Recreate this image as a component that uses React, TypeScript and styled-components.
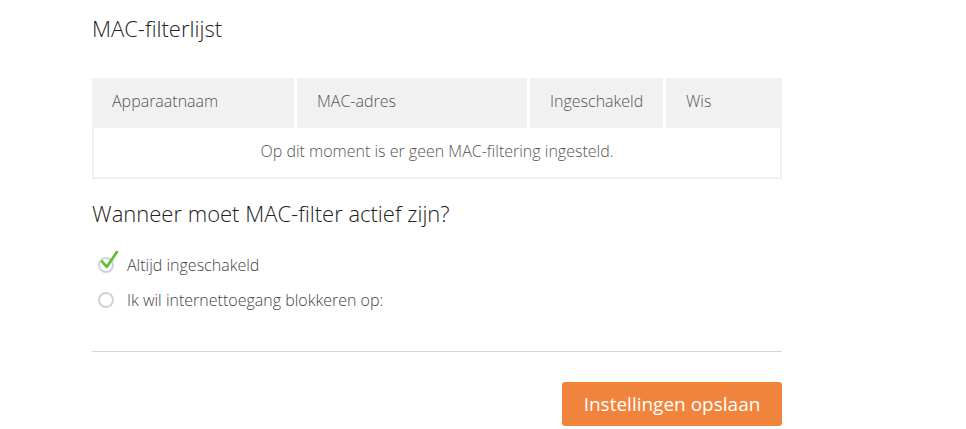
import { createGlobalStyle, styled } from "styled-components";

const GlobalStyle = createGlobalStyle`
  body {
    margin: 0;
    background: #fff;
    font-family: "Open Sans", "Liberation Sans", sans-serif;
    color: #333;
  }
`;

const Page = styled.div`
  width: 690px;
  padding: 13px 0 0 92px;
`;

const Title = styled.h2`
  margin: 0 0 35px;
  font-size: 22px;
  font-weight: 300;
  color: #222;
  line-height: 30px;
`;

const Table = styled.div`
  border: 2px solid #f0f0f2;
  border-top: none;
`;

const HeadRow = styled.div`
  display: grid;
  grid-template-columns: 202px 230px 133px 1fr;
  gap: 3px;
  margin: 0 -2px;
  background: #fff;
`;

const HeadCell = styled.div`
  height: 50px;
  display: flex;
  align-items: center;
  padding: 0 0 4px 20px;
  box-sizing: border-box;
  background: #f1f1f1;
  font-size: 16px;
  font-weight: 300;
  color: #555;
`;

const EmptyRow = styled.div`
  height: 49px;
  display: flex;
  align-items: center;
  justify-content: center;
  padding-bottom: 3px;
  box-sizing: border-box;
  font-size: 16px;
  font-weight: 300;
  color: #555;
`;

const Question = styled.h3`
  margin: 19px 0 28px;
  font-size: 22px;
  font-weight: 300;
  color: #222;
  line-height: 30px;
`;

const Options = styled.div`
  display: flex;
  flex-direction: column;
  gap: 17px;
`;

const Option = styled.label`
  display: flex;
  align-items: center;
  gap: 13px;
  height: 18px;
  padding-left: 6px;
  font-size: 16px;
  font-weight: 300;
  color: #444;
`;

const Radio = styled.span`
  position: relative;
  width: 16px;
  height: 16px;
  box-sizing: border-box;
  border: 2px solid #d2d2d2;
  border-radius: 50%;
  flex: none;
`;

const Tick = styled.svg`
  position: absolute;
  left: -1px;
  top: -9px;
`;

const Divider = styled.hr`
  margin: 42px 0 30px;
  border: none;
  border-top: 1px solid #d6d6d6;
`;

const Footer = styled.div`
  display: flex;
  justify-content: flex-end;
`;

const SaveButton = styled.button`
  width: 220px;
  height: 44px;
  border: none;
  border-radius: 3px;
  background: #f0843c;
  color: #fff;
  font-family: "Open Sans", "Liberation Sans", sans-serif;
  font-size: 19px;
  font-weight: 400;
`;

export default function App() {
  return (
    <>
      <GlobalStyle />
      <Page>
        <Title>MAC-filterlijst</Title>
        <Table>
          <HeadRow>
            <HeadCell>Apparaatnaam</HeadCell>
            <HeadCell>MAC-adres</HeadCell>
            <HeadCell>Ingeschakeld</HeadCell>
            <HeadCell>Wis</HeadCell>
          </HeadRow>
          <EmptyRow>Op dit moment is er geen MAC-filtering ingesteld.</EmptyRow>
        </Table>
        <Question>Wanneer moet MAC-filter actief zijn?</Question>
        <Options>
          <Option>
            <Radio>
              <Tick width="21" height="21" viewBox="0 0 20 20">
                <path d="M3 11 L7.5 16 L17 2" fill="none" stroke="#5bc236" strokeWidth="2.6" strokeLinecap="round" strokeLinejoin="round" />
              </Tick>
            </Radio>
            Altijd ingeschakeld
          </Option>
          <Option>
            <Radio />
            Ik wil internettoegang blokkeren op:
          </Option>
        </Options>
        <Divider />
        <Footer>
          <SaveButton>Instellingen opslaan</SaveButton>
        </Footer>
      </Page>
    </>
  );
}
